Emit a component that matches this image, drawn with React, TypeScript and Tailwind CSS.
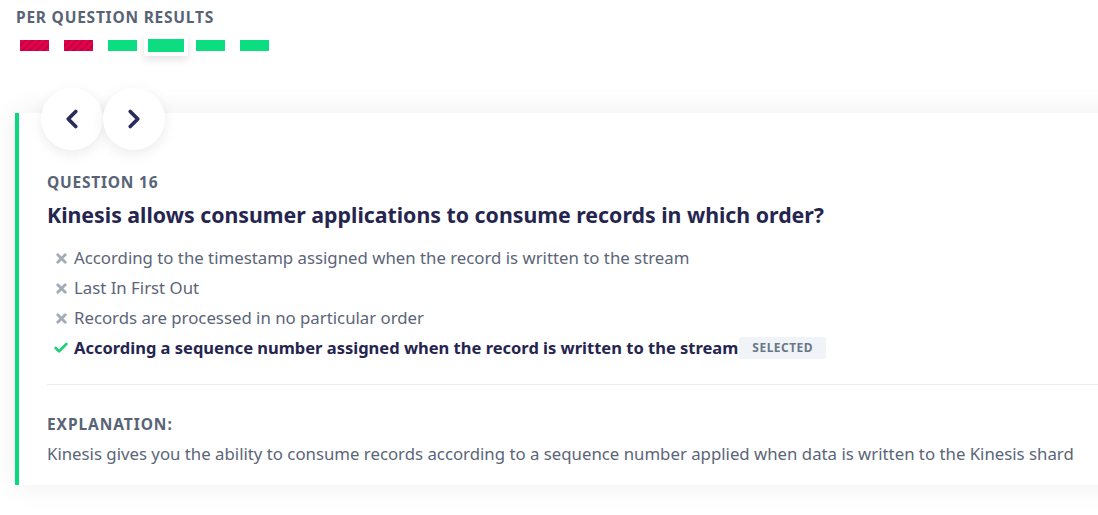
import { Check, ChevronLeft, ChevronRight, X } from "lucide-react";

type Result = "wrong" | "right";

const results: Result[] = ["wrong", "wrong", "right", "right", "right", "right"];
const activeIndex = 3;

const options = [
  { text: "According to the timestamp assigned when the record is written to the stream", correct: false },
  { text: "Last In First Out", correct: false },
  { text: "Records are processed in no particular order", correct: false },
  { text: "According a sequence number assigned when the record is written to the stream", correct: true, selected: true },
];

function ResultBar({ result, active }: { result: Result; active: boolean }) {
  const color =
    result === "wrong"
      ? "bg-[repeating-linear-gradient(135deg,#e2004f_0px,#e2004f_3px,#c5003f_3px,#c5003f_5px)]"
      : "bg-[#0bdd80]";
  if (active) {
    return (
      <div className="flex h-[21px] w-[49px] items-center justify-center bg-white shadow-[0_3px_8px_rgba(0,0,0,0.12)]">
        <div className={`h-[13px] w-[36px] ${color}`} />
      </div>
    );
  }
  return <div className={`h-[11px] w-[29px] ${color}`} />;
}

export default function App() {
  return (
    <div
      className="min-h-[515px] w-[1098px] overflow-hidden bg-white text-[#5b6578]"
      style={{ fontFamily: "'Noto Sans', 'Open Sans', sans-serif" }}
    >
      <div className="px-4 pt-[7px]">
        <h2 className="text-[15.5px] font-bold uppercase leading-[20px] tracking-[0.05em] text-[#596376]">
          Per question results
        </h2>
        <div className="mt-[8px] flex h-[21px] items-center">
          {results.map((r, i) => (
            <div key={i} className="flex w-[44px] justify-center first:ml-[-4px]">
              <ResultBar result={r} active={i === activeIndex} />
            </div>
          ))}
        </div>
      </div>

      <div className="mt-[32px] pl-[15px]">
        <div className="relative z-10 -mb-[37px] flex pl-[26px]">
          <button className="flex h-[62px] w-[62px] items-center justify-center rounded-full bg-white text-[#2b2b5c] shadow-[0_4px_14px_rgba(0,0,0,0.08)]">
            <ChevronLeft size={30} strokeWidth={3} />
          </button>
          <button className="flex h-[62px] w-[62px] items-center justify-center rounded-full bg-white text-[#2b2b5c] shadow-[0_4px_14px_rgba(0,0,0,0.08)]">
            <ChevronRight size={30} strokeWidth={3} />
          </button>
        </div>

        <div className="mr-[-40px] border-l-4 border-[#0bd97d] bg-white pb-[20px] pl-[28px] pt-[59px] shadow-[0_0_28px_rgba(0,0,0,0.07)]">
          <div className="text-[15.5px] font-bold uppercase leading-[20px] tracking-[0.05em] text-[#596376]">
            Question 16
          </div>
          <h1 className="mt-[10px] text-[21.3px] font-bold leading-[26px] text-[#25254f]">
            Kinesis allows consumer applications to consume records in which order?
          </h1>
          <ul className="mt-[15px] flex flex-col">
            {options.map((o, i) => (
              <li key={i} className="flex h-[30px] items-center">
                <span className="flex w-[27px] justify-center pl-[1px]">
                  {o.correct ? (
                    <Check size={16} strokeWidth={4} className="text-[#1dcf78]" />
                  ) : (
                    <X size={15} strokeWidth={4.5} className="text-[#a3abb7]" />
                  )}
                </span>
                <span
                  className={
                    o.correct
                      ? "text-[16.5px] font-bold text-[#25254f]"
                      : "text-[16.8px] text-[#5b6578]"
                  }
                >
                  {o.text}
                </span>
                {o.selected && (
                  <span className="ml-[1px] rounded-[3px] bg-[#f0f4f8] px-[13px] py-[4px] text-[12px] font-bold uppercase leading-[14px] tracking-[0.04em] text-[#6b7789]">
                    Selected
                  </span>
                )}
              </li>
            ))}
          </ul>
          <div className="mt-[21px] border-t border-[#ececec]" />
          <div className="mt-[29px] text-[15.5px] font-bold uppercase leading-[20px] tracking-[0.06em] text-[#596376]">
            Explanation:
          </div>
          <p className="mt-[9px] text-[16.8px] leading-[22px] text-[#5b6578]">
            Kinesis gives you the ability to consume records according to a sequence number applied when data is
            written to the Kinesis shard
          </p>
        </div>
      </div>
    </div>
  );
}
